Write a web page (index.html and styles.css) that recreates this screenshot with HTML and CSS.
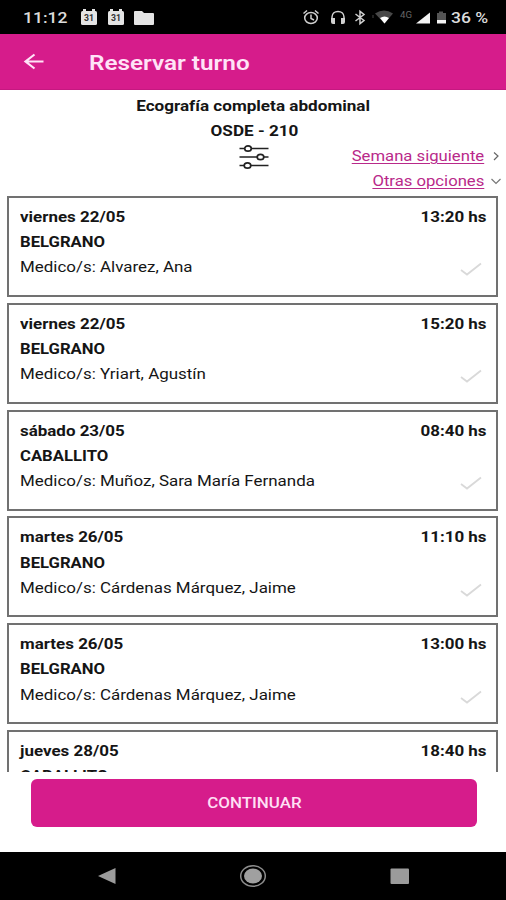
FILE: index.html
```html
<!DOCTYPE html>
<html lang="es">
<head>
<meta charset="utf-8">
<title>Reservar turno</title>
<link rel="stylesheet" href="styles.css">
</head>
<body>
<div class="status">
  <span class="clock wide">11:12</span>
  <svg class="status-left" width="80" height="20" viewBox="0 0 80 20">
    <g fill="#e4e4e4"><rect x="1" y="3" width="16" height="14" rx="1.5"/><rect x="28" y="3" width="16" height="14" rx="1.5"/><path d="M3 1h3v3H3zM12 1h3v3h-3zM30 1h3v3h-3zM39 1h3v3h-3z"/><path d="M55 3h7l2 2h9q1 0 1 1v10q0 1-1 1H55q-1 0-1-1V4q0-1 1-1z"/></g>
    <g class="cal"><text x="4" y="13" textLength="10" lengthAdjust="spacingAndGlyphs">31</text><text x="31" y="13" textLength="10" lengthAdjust="spacingAndGlyphs">31</text></g>
  </svg>
  <svg class="status-right" width="148" height="20" viewBox="0 0 148 20">
    <g fill="none" stroke="#d0d0d0" stroke-width="1.5">
      <ellipse cx="11" cy="10" rx="6.3" ry="5.5"/><path d="M11 6.500v4l3 1.500M3.500 5.500L7 2.500M18.500 5.500L15 2.500"/>
      <path d="M32 10.500V9C32 1.500 44 1.500 44 9v1.500"/>
      <path d="M55.500 6L64 12.500l-4 3.200V3.300L64 6.500l-8.500 6.500"/>
    </g>
    <path d="M31 10h4v6h-2q-2 0-2-2zM41 10h4v4q0 2-2 2h-2z" fill="#d0d0d0"/>
    <path d="M75 5.500Q84-.500 93 5.500L84.500 15.500z" fill="#484848"/><path d="M80 10q4.500-3 9 0l-4.500 5.500z" fill="#fff"/>
    <path d="M73 7v3" stroke="#444"/>
    <path d="M116 15.500L130 4.500v11z" fill="#f4f4f4"/>
    <path d="M137 5h2V3.500h4V5h3v7h-9z" fill="#555"/><path d="M137 12h9v3.500h-9z" fill="#f4f4f4"/>
    <text class="net" x="100" y="9.500" textLength="12" lengthAdjust="spacingAndGlyphs">4G</text>
  </svg>
  <span class="battery wide">36 %</span>
</div>
<header class="bar">
  <svg width="22" height="18" viewBox="0 0 22 18"><path d="M20.500 8.500H2.500M11.500 1.500L2.500 8.500l9 7" fill="none" stroke="#ffe3f7" stroke-width="2.200"/></svg>
  <h1 class="wide">Reservar turno</h1>
</header>
<main>
  <section class="intro">
    <div class="line"><span class="wide mid">Ecografía completa abdominal</span></div>
    <div class="line"><span class="wide mid plan">OSDE - 210</span></div>
    <div class="tools">
      <svg class="filter" width="32" height="26" viewBox="0 0 32 26" fill="none" stroke="#222" stroke-width="1.300"><path d="M1.500 4.500h5M13.500 4.500h17M1.500 13h17.500M26 13H30.500M1.500 21.500h4.500M13 21.500H30.500"/><g fill="#fff" stroke-width="1.700"><ellipse cx="10" cy="4.500" rx="3.300" ry="2.700"/><ellipse cx="22.500" cy="13" rx="3.300" ry="2.700"/><ellipse cx="9.500" cy="21.500" rx="3.300" ry="2.700"/></g></svg>
      <div class="links">
        <div class="link"><a class="wide right">Semana siguiente</a><svg width="12" height="12" viewBox="0 0 12 12"><path d="M4 1.500l4 3.500L4 9" fill="none" stroke="#666" stroke-width="1.200"/></svg></div>
        <div class="link"><a class="wide right">Otras opciones</a><svg width="12" height="12" viewBox="0 0 12 12"><path d="M1.500 3l4.500 4.500L10.500 3" fill="none" stroke="#777" stroke-width="1.200"/></svg></div>
      </div>
    </div>
  </section>
  <section class="list">
    <article class="card"><div class="row"><b class="wide">viernes 22/05</b><b class="wide right">13:20 hs</b></div><div class="row"><b class="wide place">BELGRANO</b></div><div class="row"><span class="wide">Medico/s: Alvarez, Ana</span><svg class="check" width="22" height="14" viewBox="0 0 22 14"><path d="M1 8l6 4.500L21 1.500"/></svg></div></article>
    <article class="card"><div class="row"><b class="wide">viernes 22/05</b><b class="wide right">15:20 hs</b></div><div class="row"><b class="wide place">BELGRANO</b></div><div class="row"><span class="wide">Medico/s: Yriart, Agustín</span><svg class="check" width="22" height="14" viewBox="0 0 22 14"><path d="M1 8l6 4.500L21 1.500"/></svg></div></article>
    <article class="card"><div class="row"><b class="wide">sábado 23/05</b><b class="wide right">08:40 hs</b></div><div class="row"><b class="wide place">CABALLITO</b></div><div class="row"><span class="wide">Medico/s: Muñoz, Sara María Fernanda</span><svg class="check" width="22" height="14" viewBox="0 0 22 14"><path d="M1 8l6 4.500L21 1.500"/></svg></div></article>
    <article class="card"><div class="row"><b class="wide">martes 26/05</b><b class="wide right">11:10 hs</b></div><div class="row"><b class="wide place">BELGRANO</b></div><div class="row"><span class="wide">Medico/s: Cárdenas Márquez, Jaime</span><svg class="check" width="22" height="14" viewBox="0 0 22 14"><path d="M1 8l6 4.500L21 1.500"/></svg></div></article>
    <article class="card"><div class="row"><b class="wide">martes 26/05</b><b class="wide right">13:00 hs</b></div><div class="row"><b class="wide place">BELGRANO</b></div><div class="row"><span class="wide">Medico/s: Cárdenas Márquez, Jaime</span><svg class="check" width="22" height="14" viewBox="0 0 22 14"><path d="M1 8l6 4.500L21 1.500"/></svg></div></article>
    <article class="card"><div class="row"><b class="wide">jueves 28/05</b><b class="wide right">18:40 hs</b></div><div class="row"><b class="wide place">CABALLITO</b></div></article>
  </section>
  <footer><button type="button"><span class="wide mid">CONTINUAR</span></button></footer>
</main>
<nav>
  <svg width="20" height="18" viewBox="0 0 20 18"><path d="M2 9L19.500 1v16z" fill="#9b9b9b"/></svg>
  <svg width="28" height="24" viewBox="0 0 28 24"><ellipse cx="14" cy="12" rx="12.300" ry="10.300" fill="none" stroke="#8d8d8d" stroke-width="1.500"/><ellipse cx="14" cy="12" rx="9" ry="7.500" fill="#a0a0a0"/></svg>
  <svg width="20" height="18" viewBox="0 0 20 18"><rect x="0.500" y="1.500" width="18.500" height="15.500" rx="1" fill="#9b9b9b"/></svg>
</nav>
</body>
</html>
```
FILE: styles.css
```css
* { box-sizing: border-box; }
body { margin: 0; width: 506px; height: 900px; overflow: hidden; display: flex; flex-direction: column; background: #fff; color: #151515; font: 14.5px Roboto, sans-serif; }
svg { display: block; flex: none; }
.wide { display: inline-block; white-space: nowrap; transform: scaleX(1.168); transform-origin: left center; }
.mid { transform-origin: center; }
.right { transform-origin: right center; }
.line .wide { transform: scaleX(1.18); }
b { font-weight: 700; }
.status { height: 34px; flex: none; background: #000; color: #dcdcdc; display: flex; align-items: center; padding: 2px 0 0 23px; font-size: 15px; font-weight: 500; }
.clock { width: 57px; }
.status-right { margin-left: 140px; }
.battery { margin-left: 3px; }
.cal text { font: 700 9px Roboto, sans-serif; fill: #333; }
.net { font: 9px Roboto, sans-serif; fill: #666; }
.bar { height: 56px; flex: none; background: #d61c8b; border-bottom: 1px solid #c51880; display: flex; align-items: center; padding-left: 23px; color: #ffe3f7; }
.bar h1 { margin: 3px 0 0 44px; font-size: 20px; font-weight: 600; transform: scaleX(1.215); }
main { height: 762px; flex: none; display: flex; flex-direction: column; }
.intro { height: 106px; flex: none; padding-top: 4px; }
.line { height: 25px; line-height: 25px; text-align: center; font-weight: 700; }
.plan { padding-left: 3px; }
.tools { display: flex; justify-content: space-between; padding: 0 4px 0 238px; }
.link { height: 25px; display: flex; align-items: center; justify-content: flex-end; gap: 6px; color: #b9298a; }
.link a { transform: scaleX(1.15); text-decoration: underline; text-decoration-thickness: 1px; text-underline-offset: 2px; }
.list { height: 576px; flex: none; overflow: hidden; padding: 0 8px 0 7px; display: flex; flex-direction: column; gap: 5.8px; }
.card { height: 101px; flex: none; border: 2px solid #717171; padding: 7px 9.5px 0 11px; line-height: 25.2px; }
.row { height: 25.2px; display: flex; justify-content: space-between; }
.place { transform: scaleX(1.15); }
.check { margin: 7px 5px 0 0; fill: none; stroke: #d9d9d9; stroke-width: 1.8; }
footer { padding: 7px 29px 0 31px; }
button { display: block; width: 100%; height: 48px; border: 0; border-radius: 6px; background: #d61c8b; color: #ffe0f5; font: 500 14.5px Roboto, sans-serif; }
nav { height: 48px; flex: none; background: #000; display: flex; justify-content: space-between; align-items: center; padding: 0 96px; }
```
